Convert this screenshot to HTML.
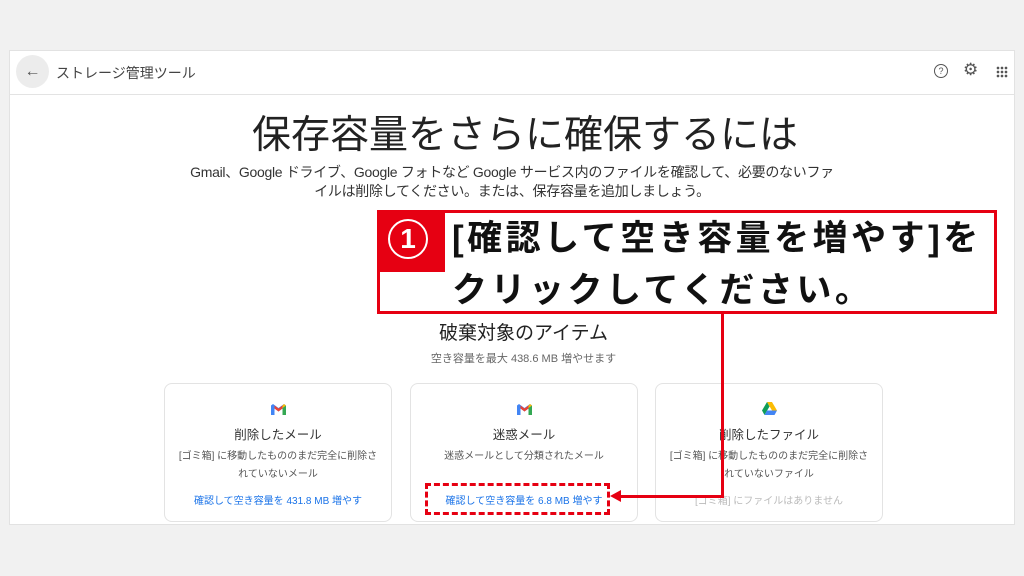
<!DOCTYPE html><html><head><meta charset="utf-8"><style>
body{margin:0;width:1024px;height:576px;background:#f1f1f1;font-family:"Liberation Sans","Noto Sans CJK JP",sans-serif;position:relative;overflow:hidden}
.a{position:absolute}
.panel{left:9px;top:50px;width:1006px;height:475px;background:#fff;border:1px solid #e2e2e2;box-sizing:border-box}
.card{top:383px;width:228px;height:139px;border:1px solid #e3e3e3;border-radius:8px;background:#fff;box-sizing:border-box;text-align:center}
.card .t{position:absolute;top:40px;width:100%;font-size:12.5px;color:#333}
.card .d{position:absolute;top:64px;left:10px;right:10px;font-size:10px;color:#555;line-height:18px}
.card .l{position:absolute;top:108px;width:100%;font-size:10px;color:#1a73e8}
.m{position:absolute;top:20px;left:106px}
</style></head><body>
<div class="a panel"></div>
<div class="a" style="left:9px;top:94px;width:1006px;height:1px;background:#e3e3e3"></div>
<div class="a" style="left:16px;top:55px;width:33px;height:33px;border-radius:50%;background:#ececec;font-size:16px;color:#555;text-align:center;line-height:33px">←</div>
<div class="a" style="left:56px;top:63px;font-size:14px;color:#444">ストレージ管理ツール</div>
<div class="a" style="left:934px;top:64px;width:12px;height:12px;border:1.5px solid #555;border-radius:50%;font-size:9px;text-align:center;line-height:12px;color:#555">?</div>
<div class="a" style="left:963px;top:60px;font-size:17px;color:#555">⚙</div>
<div class="a" style="left:996px;top:66px;width:12px;height:12px;background:radial-gradient(circle,#555 1.2px,transparent 1.5px) 0 0/4px 4px"></div>
<div class="a" style="left:0;width:1050px;top:104px;text-align:center;font-size:39px;color:#222">保存容量をさらに確保するには</div>
<div class="a" style="left:100px;width:824px;top:163px;text-align:center;font-size:14px;color:#333;line-height:19px;letter-spacing:-0.3px">Gmail、Google ドライブ、Google フォトなど Google サービス内のファイルを確認して、必要のないファ<br>イルは削除してください。または、保存容量を追加しましょう。</div>
<div class="a" style="left:0;width:1047px;top:318px;text-align:center;font-size:19px;color:#222">破棄対象のアイテム</div>
<div class="a" style="left:0;width:1047px;top:350px;text-align:center;font-size:11px;color:#666">空き容量を最大 438.6 MB 増やせます</div>
<div class="a card" style="left:164px"><svg class="m" width="15" height="11" viewBox="0 0 15 11"><path d="M0 1.5V11h3.5V4.5L7.5 7.5 11.5 4.5V11H15V1.5L13 0 7.5 4 2 0z" fill="#4285f4"/><path d="M3.5 4.5L7.5 7.5 11.5 4.5V1.5L7.5 4.5 3.5 1.5z" fill="#ea4335"/><path d="M11.5 11H15V1.5l-3.5 2.5z" fill="#34a853"/><path d="M13 0l2 1.5-3.5 2.5V1.5z" fill="#fbbc04"/></svg><div class="t">削除したメール</div><div class="d">[ゴミ箱] に移動したもののまだ完全に削除されていないメール</div><div class="l">確認して空き容量を 431.8 MB 増やす</div></div>
<div class="a card" style="left:410px"><svg class="m" width="15" height="11" viewBox="0 0 15 11"><path d="M0 1.5V11h3.5V4.5L7.5 7.5 11.5 4.5V11H15V1.5L13 0 7.5 4 2 0z" fill="#4285f4"/><path d="M3.5 4.5L7.5 7.5 11.5 4.5V1.5L7.5 4.5 3.5 1.5z" fill="#ea4335"/><path d="M11.5 11H15V1.5l-3.5 2.5z" fill="#34a853"/><path d="M13 0l2 1.5-3.5 2.5V1.5z" fill="#fbbc04"/></svg><div class="t">迷惑メール</div><div class="d">迷惑メールとして分類されたメール</div><div class="l">確認して空き容量を 6.8 MB 増やす</div></div>
<div class="a card" style="left:655px"><svg class="a" style="left:106px;top:18px" width="15" height="13" viewBox="0 0 15 13"><path d="M5 0h5l5 8.5h-5z" fill="#fbbc04"/><path d="M5 0L0 8.5l2.5 4.5 5-8.5z" fill="#0f9d58"/><path d="M2.5 13h10l2.5-4.5H5z" fill="#4285f4"/></svg><div class="t">削除したファイル</div><div class="d">[ゴミ箱] に移動したもののまだ完全に削除されていないファイル</div><div class="l" style="color:#bbb">[ゴミ箱] にファイルはありません</div></div>
<div class="a" style="left:425px;top:483px;width:185px;height:32px;border:3px dashed #e60012;box-sizing:border-box"></div>
<div class="a" style="left:721px;top:313px;width:3px;height:185px;background:#e60012"></div>
<div class="a" style="left:620px;top:495px;width:104px;height:3px;background:#e60012"></div>
<div class="a" style="left:610px;top:490px;width:0;height:0;border-top:6px solid transparent;border-bottom:6px solid transparent;border-right:11px solid #e60012"></div>
<div class="a" style="left:377px;top:210px;width:620px;height:104px;border:3px solid #e60012;box-sizing:border-box;background:#fff"></div>
<div class="a" style="left:377px;top:210px;width:68px;height:62px;background:#e60012"></div>
<div class="a" style="left:388px;top:219px;width:40px;height:40px;border:2px solid #fff;border-radius:50%;box-sizing:border-box;color:#fff;font-size:28px;text-align:center;line-height:36px;font-weight:bold">1</div>
<div class="a" style="left:452px;top:213px;font-size:35px;font-weight:bold;color:#111;line-height:52px;white-space:nowrap;letter-spacing:3.5px">[確認して空き容量を増やす]を<br>クリックしてください。</div>
</body></html>
